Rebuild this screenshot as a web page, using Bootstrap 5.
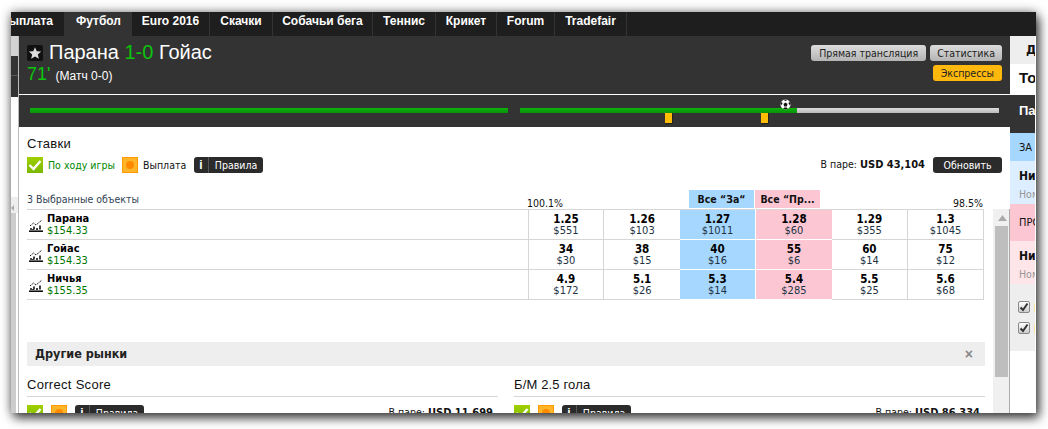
<!DOCTYPE html>
<html lang="ru">
<head>
<meta charset="utf-8">
<title>Парана 1-0 Гойас</title>
<link href="https://cdn.jsdelivr.net/npm/bootstrap@5.3.0/dist/css/bootstrap.min.css" rel="stylesheet">
<style>
html,body{margin:0;width:1048px;height:429px;overflow:hidden;background:#fff;}
body{font-family:"DejaVu Sans Condensed","DejaVu Sans",sans-serif;font-stretch:condensed;font-size:10.5px;color:#111;line-height:1.2;}
.shell{margin:12px 0 0 11px;width:1025px;height:401px;overflow:hidden;box-shadow:0 0 10px rgba(0,0,0,.4),3px 5px 10px rgba(0,0,0,.7);background:#fff;}
.topnav{height:24px;background:#1e1e1e;}
.topnav a{height:24px;display:flex;align-items:center;justify-content:center;color:#fff;font:bold 12px "Liberation Sans",sans-serif;text-decoration:none;border-right:1px solid #333;padding-bottom:6px;}
.topnav a.first{justify-content:flex-end;padding-right:11px;}
.topnav a.on{background:#333;border-right:0;}
.lstrip{width:8px;border-right:1px solid #bbb;}
.ls1{height:20px;background:#d2d2d2;width:7px;}
.ls2{height:20px;background:#333;border-bottom:1px solid #555;width:7px;}
.ls3{height:21px;background:#333;width:7px;}
.ls4{height:100px;width:7px;}
.ls5{height:16px;background:#eee;width:7px;}
.ls6{height:224px;background:#ccc;width:5px;}
.mainp{width:991px;}
.headp{height:58px;background:#333;padding:9px 8px 0;}
.starbox{width:16px;height:16px;background:#111;border-radius:2px;}
.mtitle{font:20px/18px "Liberation Sans",sans-serif;color:#fff;margin:-2px 0 0 6px;}
.gn{color:#0cc40c;}
.mclock{font:18px/20px "Liberation Sans",sans-serif;color:#0cc40c;margin-top:3px;}
.mclock span{font-size:12px;color:#fff;}
.btn.gbtn{height:16px;padding:0 8px;border:0;border-radius:3px;font-size:10.5px;line-height:16px;color:#222;background:linear-gradient(#dcdcdc,#b4b4b4);}
.btn.gbtn.stat{padding:0 7px;}
.btn.ybtn{background:#ffb80c;padding:0 8px;}
.btnwrap{gap:4px;}
.tline{height:33px;background:#333;border-top:1px solid #fff;padding:13px 11px 0;}
.seg1{width:478px;height:5px;background:linear-gradient(#0cb40c,#089008);margin-right:12px;}
.seg2{width:479px;height:5px;background:linear-gradient(#ddd,#bbb);}
.seg2 i{display:block;width:277px;height:5px;background:linear-gradient(#0cb40c,#089008);}
.mk{position:absolute;top:5px;width:8px;height:11px;background:#ffbc00;box-shadow:inset -1px -1px 0 #222;}
.ballic{position:absolute;top:-9px;left:260px;}
.bets{height:82px;padding:10px 8px 0;}
.hbets{font:13px/14px "Liberation Sans",sans-serif;letter-spacing:.3px;color:#111;}
.toolr{height:16px;margin-top:6px;}
.ck{width:16px;height:16px;flex:none;}
.ck1{background:linear-gradient(#a0d000,#7ab800);}
.ck2{background:#ffb52a;border:1px solid #ff9a00;}
.lbl1{color:#080;margin:0 9px 0 5px;width:65px;white-space:nowrap;}
.lbl2{margin:0 9px 0 5px;width:42px;white-space:nowrap;}
.btn.rules{height:16px;width:69px;flex:none;padding:0;border:0;border-radius:3px;background:#2b2b2b;color:#fff;font-size:10.5px;line-height:16px;display:flex;}
.rules b{width:15px;border-right:1px solid #555;font:bold 12px/16px "Liberation Sans",sans-serif;}
.rules span{flex:1;text-align:center;}
.btn.refresh{height:16px;width:69px;padding:0;border:0;border-radius:3px;background:#2b2b2b;color:#fff;font-size:10.5px;line-height:16px;margin-left:8px;}
.pool strong{font-weight:bold;font-size:11px;}
.mbar .pool{margin-right:5px;}
.labs{height:19px;margin-top:17px;}
.labs .sel{width:500px;color:#345;align-self:center;}
.labs .pc1{width:162px;padding-top:7px;}
.labs .pc2{margin-left:auto;padding-top:7px;margin-right:19px;}
.allb,.alll{width:65px;height:18px;font-weight:bold;font-size:10.5px;line-height:18px;text-align:center;white-space:nowrap;}
.allb{background:#a6d7ff;margin-right:1px;}
.alll{background:#fcc7d3;}
.scrollp{height:204px;}
.leftcol{width:974px;padding-left:8px;}
table.odds{width:957px;margin:0;table-layout:fixed;border-collapse:collapse;border-top:1px solid #d6d6d6;border-right:1px solid #d6d6d6;}
.odds td{height:30px;padding:0;border-bottom:1px solid #d6d6d6;text-align:center;line-height:11px;font-size:11px;vertical-align:middle;color:#234;}
.odds td b{display:block;color:#000;font-size:11.5px;line-height:12px;}
.odds td.nm{width:501px;text-align:left;color:#070;}
.odds td.nm b{font-size:11px;}
.odds td.od{border-left:1px solid #d6d6d6;}
.odds td.ob{background:#a6d7ff;border-bottom-color:#fff;}
.odds td.ol{background:#fcc7d3;border-left:1px solid #fff;border-bottom-color:#fff;}
.chic{margin:0 4px 0 2px;flex:none;}
.other{height:24px;background:#eee;margin-top:42px;width:958px;padding:0 8px;font-weight:bold;font-size:12.5px;line-height:24px;color:#222;}
.other .xx{color:#888;font:bold 14px/24px "Liberation Sans",sans-serif;margin-right:4px;}
.twoc{margin-top:10px;width:958px;}
.mcol1{width:471px;margin-right:16px;}
.mcol2{width:471px;}
.mhd{height:21px;padding-top:1px;font:13px/16px "Liberation Sans",sans-serif;border-bottom:1px solid #d6d6d6;letter-spacing:.15px;}
.mcol1 .mhd{letter-spacing:.3px;}
.mbar{height:16px;margin-top:8px;}
.mbar .ck2{margin-left:8px;margin-right:8px;}
.sbar{width:17px;background:#f0f0f0;border-right:1px solid #aaa;padding:0 0 0 2px;}
.sup{height:17px;}
.sthumb{height:151px;width:13px;background:#bebebe;}
.sidep{width:25px;overflow:hidden;font-size:11px;line-height:14px;white-space:nowrap;}
.s1{height:28px;background:#eee;padding:7px 0 0 16px;font-weight:bold;font-size:13px;}
.s2{height:31px;padding:7px 0 0 9px;font:bold 15px/14px "Liberation Sans",sans-serif;}
.s3{height:38px;background:#333;color:#fff;padding:9px 0 0 9px;font:bold 13px/14px "Liberation Sans",sans-serif;}
.s4{height:28px;background:#a6d7ff;padding:8px 0 0 9px;}
.s5{height:43px;background:#dceeff;padding:8px 0 0 9px;}
.s6{height:37px;background:#fcc7d3;padding:12px 0 0 9px;}
.s7{height:43px;background:#fde5ea;padding:8px 0 0 9px;}
.s5 b,.s7 b{display:block;font-size:12px;}
.s5 small,.s7 small{display:block;color:#999;font-size:10.5px;margin-top:4px;}
.s8{height:67px;background:#eee;padding:17px 0 0 8px;}
.cbrow{gap:4px;margin-bottom:9px;}
.cbx{width:12px;height:12px;flex:none;border:1px solid #888;border-radius:2px;background:linear-gradient(#fff,#ccc);}
.cbtail{width:2px;height:9px;background:#fbe3a0;flex:none;}
</style>
</head>
<body>
<div class="shell d-flex flex-column">
  <nav class="topnav d-flex flex-none">
    <a href="#" class="first" style="width:54px">ыплата</a>
    <a href="#" class="on" style="width:67px">Футбол</a>
    <a href="#" style="width:78px">Euro 2016</a>
    <a href="#" style="width:63px">Скачки</a>
    <a href="#" style="width:100px">Собачьи бега</a>
    <a href="#" style="width:63px">Теннис</a>
    <a href="#" style="width:61px">Крикет</a>
    <a href="#" style="width:58px">Forum</a>
    <a href="#" style="width:72px">Tradefair</a>
  </nav>
  <div class="d-flex flex-grow-1">
    <div class="lstrip">
      <div class="ls1"></div><div class="ls2"></div><div class="ls3"></div><div class="ls4"></div>
      <div class="ls5 d-flex align-items-start"><svg width="4" height="6" viewBox="0 0 4 6" class="mt-2"><path d="M0 3l3-3v6z" fill="#aaa"/></svg></div>
      <div class="ls6"></div>
    </div>
    <div class="mainp">
      <div class="headp d-flex justify-content-between">
        <div>
          <div class="d-flex align-items-center">
            <span class="starbox d-flex align-items-center justify-content-center">
              <svg width="14" height="14" viewBox="0 0 24 24"><polygon fill="#ddd" points="12,2 15,9 22.5,9.6 16.8,14.5 18.6,22 12,18 5.4,22 7.2,14.5 1.5,9.6 9,9"/></svg>
            </span>
            <span class="mtitle">Парана <span class="gn">1-0</span> Гойас</span>
          </div>
          <div class="mclock">71' <span>(Матч 0-0)</span></div>
        </div>
        <div class="d-flex flex-column align-items-end btnwrap">
          <div class="d-flex btnwrap">
            <button class="btn gbtn">Прямая трансляция</button>
            <button class="btn gbtn stat">Статистика</button>
          </div>
          <button class="btn gbtn ybtn">Экспрессы</button>
        </div>
      </div>
      <div class="tline d-flex">
        <div class="seg1"></div>
        <div class="seg2 position-relative"><i></i>
          <span class="mk" style="left:145px"></span>
          <span class="mk" style="left:241px"></span>
          <svg class="ballic" width="11" height="11" viewBox="0 0 22 22"><circle cx="11" cy="11" r="10" fill="#fff"/><polygon fill="#111" points="11,7 15,10 13.5,15 8.5,15 7,10"/><path fill="#111" d="M7 1.5h8L11 4zM1 8l3-2 1 3-3 4zM21 8l-3-2-1 3 3 4zM6 19l3-2h4l3 2-5 2z"/></svg>
        </div>
      </div>
      <div class="bets">
        <div class="hbets">Ставки</div>
        <div class="toolr d-flex align-items-center">
          <span class="ck ck1 d-flex align-items-center justify-content-center">
            <svg width="14" height="12" viewBox="0 0 14 12"><path d="M1.5 6l4 4 7-8" fill="none" stroke="#fff" stroke-width="2.4"/></svg>
          </span>
          <span class="lbl1">По ходу игры</span>
          <span class="ck ck2 d-flex align-items-center justify-content-center">
            <svg width="8" height="8" viewBox="0 0 8 8"><circle cx="4" cy="4" r="4" fill="#ff8a00"/></svg>
          </span>
          <span class="lbl2">Выплата</span>
          <button class="btn rules"><b>i</b><span>Правила</span></button>
          <span class="pool ms-auto">В паре: <strong>USD 43,104</strong></span>
          <button class="btn refresh">Обновить</button>
        </div>
        <div class="labs d-flex">
          <div class="sel">3 Выбранные объекты</div>
          <div class="pc1">100.1%</div>
          <div class="allb">Все “За“</div>
          <div class="alll">Все “Пр...</div>
          <div class="pc2">98.5%</div>
        </div>
      </div>
      <div class="scrollp d-flex">
        <div class="leftcol">
          <table class="odds">
            <tr>
              <td class="nm"><div class="d-flex align-items-center"><svg class="chic" width="14" height="14" viewBox="0 0 14 14"><path d="M0 13.2h14" stroke="#111" stroke-width="1.6"/><path d="M1 11h2M5 8.5v3M8 10v2M11 7.5v4M4 11v1" stroke="#111" stroke-width="1.6"/><path d="M1 8l3.5-3 2.5 2 6-5" fill="none" stroke="#111" stroke-dasharray="1.4 .8"/></svg><div><b>Парана</b>$154.33</div></div></td>
              <td class="od"><b>1.25</b>$551</td><td class="od"><b>1.26</b>$103</td><td class="ob"><b>1.27</b>$1011</td><td class="ol"><b>1.28</b>$60</td><td><b>1.29</b>$355</td><td class="od"><b>1.3</b>$1045</td>
            </tr>
            <tr>
              <td class="nm"><div class="d-flex align-items-center"><svg class="chic" width="14" height="14" viewBox="0 0 14 14"><path d="M0 13.2h14" stroke="#111" stroke-width="1.6"/><path d="M1 11h2M5 8.5v3M8 10v2M11 7.5v4M4 11v1" stroke="#111" stroke-width="1.6"/><path d="M1 8l3.5-3 2.5 2 6-5" fill="none" stroke="#111" stroke-dasharray="1.4 .8"/></svg><div><b>Гойас</b>$154.33</div></div></td>
              <td class="od"><b>34</b>$30</td><td class="od"><b>38</b>$15</td><td class="ob"><b>40</b>$16</td><td class="ol"><b>55</b>$6</td><td><b>60</b>$14</td><td class="od"><b>75</b>$12</td>
            </tr>
            <tr>
              <td class="nm"><div class="d-flex align-items-center"><svg class="chic" width="14" height="14" viewBox="0 0 14 14"><path d="M0 13.2h14" stroke="#111" stroke-width="1.6"/><path d="M1 11h2M5 8.5v3M8 10v2M11 7.5v4M4 11v1" stroke="#111" stroke-width="1.6"/><path d="M1 8l3.5-3 2.5 2 6-5" fill="none" stroke="#111" stroke-dasharray="1.4 .8"/></svg><div><b>Ничья</b>$155.35</div></div></td>
              <td class="od"><b>4.9</b>$172</td><td class="od"><b>5.1</b>$26</td><td class="ob"><b>5.3</b>$14</td><td class="ol"><b>5.4</b>$285</td><td><b>5.5</b>$25</td><td class="od"><b>5.6</b>$68</td>
            </tr>
          </table>
          <div class="other d-flex justify-content-between"><span>Другие рынки</span><span class="xx">×</span></div>
          <div class="twoc d-flex">
            <div class="mcol1">
              <div class="mhd">Correct Score</div>
              <div class="mbar d-flex align-items-center"><span class="ck ck1 d-flex align-items-center justify-content-center"><svg width="14" height="12" viewBox="0 0 14 12"><path d="M1.5 6l4 4 7-8" fill="none" stroke="#fff" stroke-width="2.4"/></svg></span><span class="ck ck2 d-flex align-items-center justify-content-center"><svg width="8" height="8" viewBox="0 0 8 8"><circle cx="4" cy="4" r="4" fill="#ff8a00"/></svg></span><button class="btn rules"><b>i</b><span>Правила</span></button><span class="pool ms-auto">В паре: <strong>USD 11,699</strong></span></div>
            </div>
            <div class="mcol2">
              <div class="mhd">Б/М 2.5 гола</div>
              <div class="mbar d-flex align-items-center"><span class="ck ck1 d-flex align-items-center justify-content-center"><svg width="14" height="12" viewBox="0 0 14 12"><path d="M1.5 6l4 4 7-8" fill="none" stroke="#fff" stroke-width="2.4"/></svg></span><span class="ck ck2 d-flex align-items-center justify-content-center"><svg width="8" height="8" viewBox="0 0 8 8"><circle cx="4" cy="4" r="4" fill="#ff8a00"/></svg></span><button class="btn rules"><b>i</b><span>Правила</span></button><span class="pool ms-auto">В паре: <strong>USD 86,334</strong></span></div>
            </div>
          </div>
        </div>
        <div class="sbar">
          <div class="sup d-flex justify-content-center align-items-center"><svg width="9" height="6" viewBox="0 0 9 6"><path d="M4.5 0L9 6H0z" fill="#aaa"/></svg></div>
          <div class="sthumb"></div>
        </div>
      </div>
    </div>
    <aside class="sidep">
      <div class="s1">Д</div>
      <div class="s2">То</div>
      <div class="s3">Па</div>
      <div class="s4">ЗА</div>
      <div class="s5"><b>Ничья</b><small>Номер</small></div>
      <div class="s6">ПРОТИВ</div>
      <div class="s7"><b>Ничья</b><small>Номер</small></div>
      <div class="s8">
        <div class="d-flex align-items-center cbrow"><div class="cbx d-flex align-items-center justify-content-center"><svg width="10" height="10" viewBox="0 0 10 10"><path d="M1.5 5.5l2.5 2.5 4.5-6.5" fill="none" stroke="#333" stroke-width="2"/></svg></div><span class="cbtail"></span></div>
        <div class="d-flex align-items-center cbrow"><div class="cbx d-flex align-items-center justify-content-center"><svg width="10" height="10" viewBox="0 0 10 10"><path d="M1.5 5.5l2.5 2.5 4.5-6.5" fill="none" stroke="#333" stroke-width="2"/></svg></div><span class="cbtail"></span></div>
      </div>
    </aside>
  </div>
</div>
<script src="https://cdn.jsdelivr.net/npm/bootstrap@5.3.0/dist/js/bootstrap.bundle.min.js"></script>
</body>
</html>
